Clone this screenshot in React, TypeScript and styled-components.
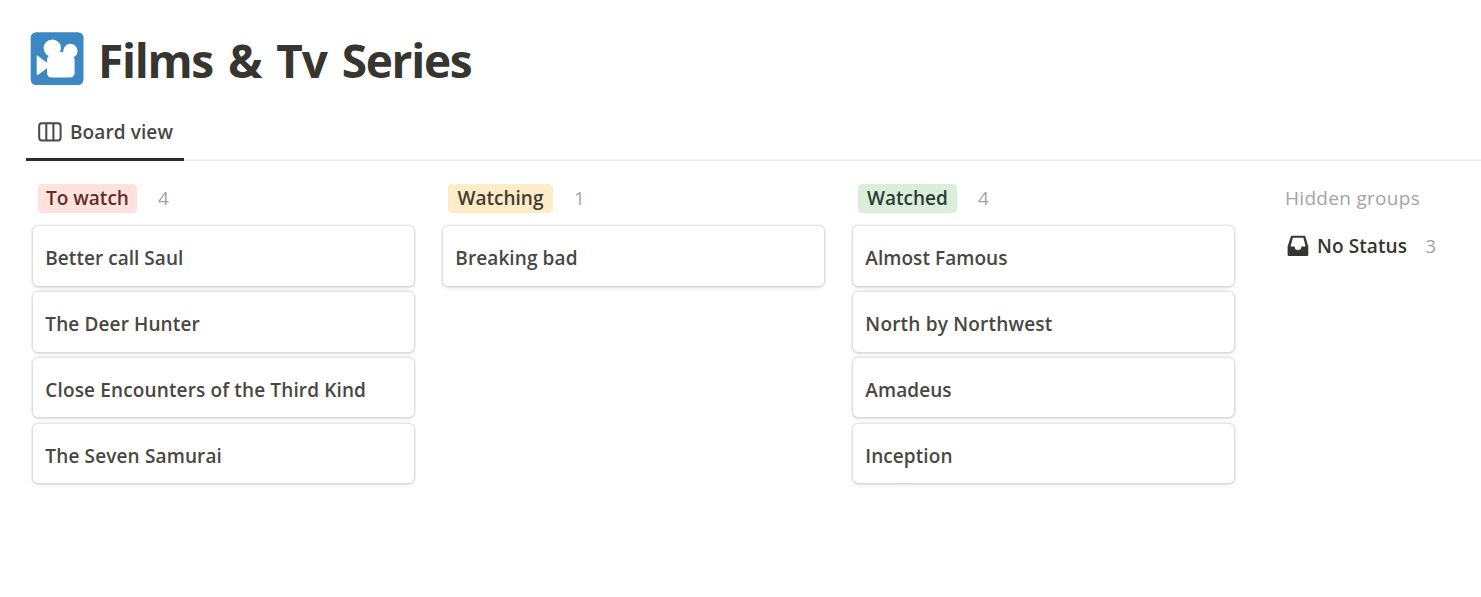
import React from "react";
import styled, { createGlobalStyle } from "styled-components";

const GlobalStyle = createGlobalStyle`
  * { box-sizing: border-box; }
  body {
    margin: 0;
    background: #fff;
    color: #37352f;
    font-family: "Segoe UI", "Open Sans", "Noto Sans", sans-serif;
    font-size: 19px;
  }
`;

const Page = styled.main`
  height: 597px;
  padding: 32px 0 0 26px;
  overflow: hidden;
`;

const Header = styled.header`
  display: flex;
  align-items: center;
  gap: 14px;
  height: 53px;
  padding-left: 4px;
`;

const Title = styled.h1`
  margin: 0;
  padding-top: 3px;
  font-size: 46px;
  font-weight: 700;
  line-height: 60px;
  white-space: nowrap;
`;

const Label = styled.span<{ $track?: number; $word?: number }>`
  letter-spacing: ${(p) => p.$track ?? 0}px;
  word-spacing: ${(p) => p.$word ?? 0}px;
  white-space: nowrap;
`;

const TabBar = styled.nav`
  display: flex;
  height: 57px;
  margin-top: 19px;
  box-shadow: inset 0 -1.5px 0 #e9e9e7;
`;

const Tab = styled.div`
  display: flex;
  align-items: center;
  gap: 8px;
  width: 158px;
  padding: 2px 0 0 12px;
  border-bottom: 3px solid #2f2d28;
  color: #494742;
  font-weight: 600;
  line-height: 28px;
`;

const Board = styled.section`
  display: flex;
  gap: 27px;
  padding: 23px 0 0 6px;
`;

const Column = styled.div`
  width: 383px;
  flex: none;
`;

const ColumnHeader = styled.div`
  display: flex;
  align-items: center;
  gap: 21px;
  height: 29px;
  margin-bottom: 13px;
  padding-left: 6px;
`;

const Tag = styled.span<{ $bg: string; $fg: string; $width: number }>`
  width: ${(p) => p.$width}px;
  height: 29px;
  border-radius: 4px;
  background: ${(p) => p.$bg};
  color: ${(p) => p.$fg};
  font-weight: 600;
  line-height: 29px;
  text-align: center;
`;

const Count = styled.span`
  color: #a5a4a1;
  font-weight: 400;
  line-height: 29px;
`;

const CardList = styled.div`
  display: flex;
  flex-direction: column;
  gap: 6.2px;
  padding: 0 1px;
`;

const Card = styled.article`
  display: flex;
  align-items: center;
  height: 59.7px;
  padding: 4.2px 12.3px 0;
  border-radius: 5px;
  background: #fff;
  box-shadow: 0 0 0 1.5px rgba(15, 15, 15, 0.1), 0 3px 5px rgba(15, 15, 15, 0.07);
  color: #494742;
  font-weight: 600;
`;

const HiddenGroups = styled.aside`
  padding-left: 23px;
`;

const HiddenTitle = styled.div`
  height: 29px;
  color: #a5a4a1;
  font-weight: 400;
  line-height: 29px;
`;

const HiddenRow = styled.div`
  display: flex;
  align-items: center;
  height: 28px;
  margin-top: 19px;
  padding-left: 2px;
  font-weight: 600;

  svg { margin-right: 8px; }
  ${Count} { margin-left: 18px; }
`;

const CameraIcon = () => (
  <svg width="54" height="54" viewBox="0 0 54 54" aria-hidden="true">
    <rect x="0.7" y="0.2" width="52.8" height="52.8" rx="5.5" fill="#3b88c3" />
    <g fill="#fff">
      <circle cx="22.3" cy="16.1" r="8.7" />
      <circle cx="40.4" cy="19" r="7.2" />
      <rect x="17" y="23" width="27.6" height="22.6" rx="4.7" />
      <path d="M26 20H36.5L40 25H24Z" />
      <path d="M6.7 24.2Q6.8 23 7.8 23.8L18 31.5V35.5L7.8 42.9Q6.8 43.6 6.7 42.4Z" />
    </g>
  </svg>
);

const BoardIcon = () => (
  <svg width="24" height="20" viewBox="0 0 24 20" fill="none" stroke="#4a4843" strokeWidth="2" aria-hidden="true">
    <rect x="1.2" y="1.2" width="21.4" height="17.2" rx="2.6" />
    <path d="M8.3 1.2V18.4M15.4 1.2V18.4" />
  </svg>
);

const InboxIcon = () => (
  <svg width="22" height="22" viewBox="0 0 22 22" aria-hidden="true">
    <path
      fill="#37352f"
      fillRule="evenodd"
      d="M5.4 0.7H16.9C17.8 0.7 18.3 1.1 18.5 1.9L21.3 11.5V19.4C21.3 20.5 20.7 21 19.7 21H2.2C1.2 21 0.6 20.5 0.6 19.4V11.5L3.7 1.9C4 1.1 4.5 0.7 5.4 0.7ZM5.9 2.8L3.5 11.6H7.6C7.6 13.8 9 15.2 11 15.2C13 15.2 14.4 13.8 14.4 11.6H18.6L16.4 2.8Z"
    />
  </svg>
);

type Item = { text: string; track: number };
type Group = { name: string; width: number; bg: string; fg: string; items: Item[] };

const groups: Group[] = [
  {
    name: "To watch", width: 99, bg: "#ffe2dd", fg: "#5d2f2a",
    items: [
      { text: "Better call Saul", track: 0.04 },
      { text: "The Deer Hunter", track: 0.12 },
      { text: "Close Encounters of the Third Kind", track: 0.14 },
      { text: "The Seven Samurai", track: 0.14 },
    ],
  },
  {
    name: "Watching", width: 105, bg: "#fdecc8", fg: "#463a32",
    items: [{ text: "Breaking bad", track: 0.1 }],
  },
  {
    name: "Watched", width: 99, bg: "#dbeddb", fg: "#2b3d36",
    items: [
      { text: "Almost Famous", track: 0.06 },
      { text: "North by Northwest", track: 0.2 },
      { text: "Amadeus", track: 0.08 },
      { text: "Inception", track: 0.08 },
    ],
  },
];

export default function App() {
  return (
    <>
      <GlobalStyle />
      <Page>
        <Header>
          <CameraIcon />
          <Title><Label $track={-1.3} $word={4.5}>Films &amp; Tv Series</Label></Title>
        </Header>
        <TabBar>
          <Tab><BoardIcon /><Label $track={0.1}>Board view</Label></Tab>
        </TabBar>
        <Board>
          {groups.map((g) => (
            <Column key={g.name}>
              <ColumnHeader>
                <Tag $bg={g.bg} $fg={g.fg} $width={g.width}><Label>{g.name}</Label></Tag>
                <Count>{g.items.length}</Count>
              </ColumnHeader>
              <CardList>
                {g.items.map((i) => (
                  <Card key={i.text}><Label $track={i.track}>{i.text}</Label></Card>
                ))}
              </CardList>
            </Column>
          ))}
          <HiddenGroups>
            <HiddenTitle><Label $track={0.3}>Hidden groups</Label></HiddenTitle>
            <HiddenRow><InboxIcon /><Label $track={0.1}>No Status</Label><Count>3</Count></HiddenRow>
          </HiddenGroups>
        </Board>
      </Page>
    </>
  );
}
